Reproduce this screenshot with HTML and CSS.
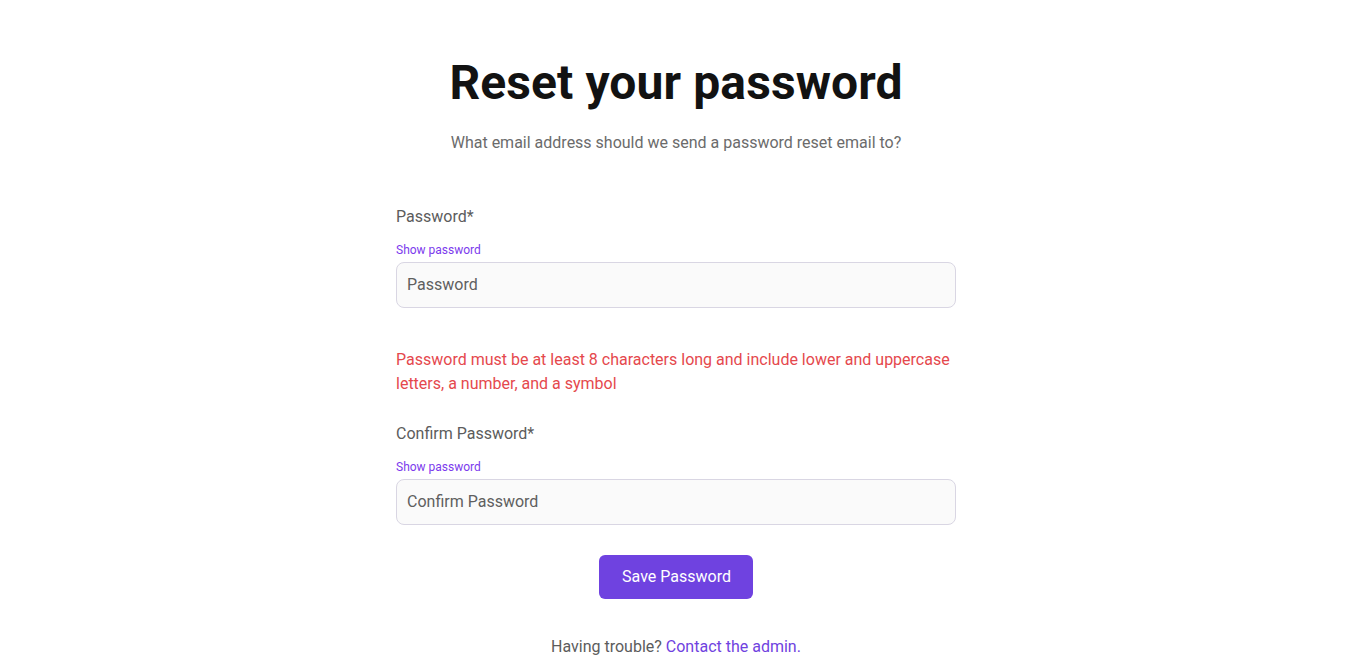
FILE: index.html
```html
<!DOCTYPE html>
<html lang="en">

<head>
    <meta charset="UTF-8">
    <title>Reset your password</title>
    <link rel="stylesheet" href="styles.css">
</head>

<body>
    <div class="page">
        <h1 class="title">Reset your password</h1>
        <p class="subtitle">What email address should we send a password reset email to?</p>

        <form class="form">
            <label class="label" for="password">Password*</label>
            <a class="toggle" href="#">Show password</a>
            <input class="input" id="password" type="password" placeholder="Password">

            <p class="error">Password must be at least 8 characters long and include lower and uppercase letters, a number, and a symbol</p>

            <label class="label" for="confirm">Confirm Password*</label>
            <a class="toggle" href="#">Show password</a>
            <input class="input" id="confirm" type="password" placeholder="Confirm Password">

            <div class="actions">
                <button class="button" type="button">Save Password</button>
            </div>
        </form>

        <p class="help">Having trouble? <a href="#">Contact the admin.</a></p>
    </div>
</body>

</html>
```

FILE: styles.css
```css
html,
body {
    margin: 0;
    padding: 0;
    background: #fff;
    font-family: Roboto, "Liberation Sans", sans-serif;
}

.page {
    display: flex;
    flex-direction: column;
    align-items: center;
    padding: 52px 0 0 6px;
}

.title {
    margin: 0;
    font-size: 48px;
    line-height: 62px;
    font-weight: 700;
    letter-spacing: 0.1px;
    color: #121212;
}

.subtitle {
    margin: 17px 0 0;
    font-size: 16px;
    line-height: 24px;
    color: #6b6b6b;
}

.form {
    width: 560px;
    display: flex;
    flex-direction: column;
    margin-top: 50px;
}

.label {
    font-size: 16px;
    line-height: 24px;
    color: #5c5c5c;
}

.toggle {
    margin-top: 13px;
    font-size: 12px;
    line-height: 16px;
    color: #7c3aed;
    text-decoration: none;
    align-self: flex-start;
}

.input {
    box-sizing: border-box;
    margin-top: 4px;
    height: 46px;
    padding: 0 10px 1px;
    border: 1px solid #d9d6e3;
    border-radius: 8px;
    background: #fafafa;
    font-family: inherit;
    font-size: 16px;
    color: #333;
}

.input::placeholder {
    color: #5f5f5f;
}

.error {
    margin: 40px 0 26px;
    font-size: 16px;
    line-height: 24px;
    color: #e5484d;
}

.actions {
    display: flex;
    justify-content: center;
    margin-top: 30px;
}

.button {
    height: 44px;
    padding: 0 22px 1px 23px;
    border: none;
    border-radius: 6px;
    background: #6f42e0;
    color: #fff;
    font-family: inherit;
    font-size: 16px;
}

.help {
    margin: 36px 0 0;
    font-size: 16px;
    line-height: 24px;
    color: #5c5c5c;
}

.help a {
    color: #6f42e0;
    text-decoration: none;
}
```
